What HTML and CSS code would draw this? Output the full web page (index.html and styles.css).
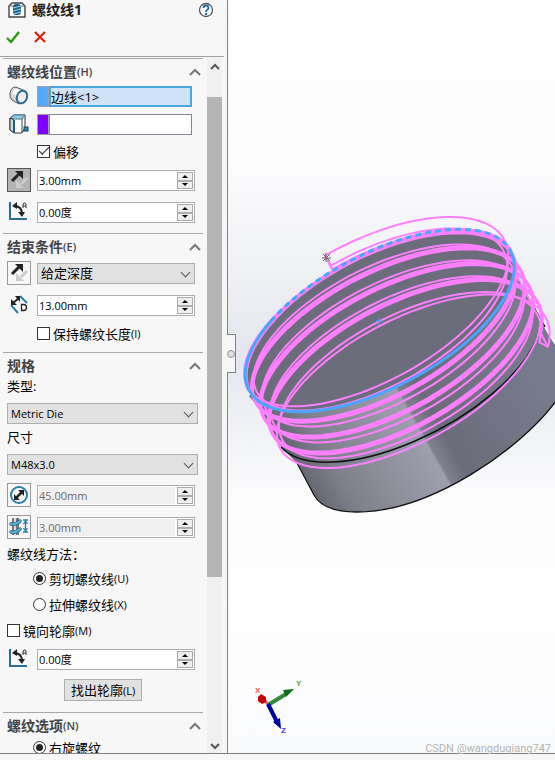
FILE: index.html
```html
<!DOCTYPE html>
<html lang="zh-CN">
<head>
  <meta charset="UTF-8">
  <meta name="viewport" content="width=device-width, initial-scale=1.0">
  <title>螺纹线1</title>
  <link rel="stylesheet" href="styles.css">
</head>
<body>
  <svg class="defs" width="0" height="0" aria-hidden="true">
    <symbol id="i-flip" viewBox="0 0 22 22">
      <path d="M4 12l7-7" stroke="#222" stroke-width="3"/>
      <path d="M7 2h8v8z" fill="#222"/>
      <path d="M19 9l-6 6" stroke="#ccc" stroke-width="3"/>
      <path d="M8 11v8h8z" fill="#ccc"/>
    </symbol>
    <symbol id="i-angle" viewBox="0 0 22 22">
      <path d="M3 2v17h17" fill="none" stroke="#2a6d8f" stroke-width="2"/>
      <path d="M7 6q8 0 8 8" fill="none" stroke="#222" stroke-width="2"/>
      <path d="M5 6l5-4v7zM11 12h7l-3 5z" fill="#222"/>
      <path d="M16 8V4l1-1h1l1 1v4M16 6h3" fill="none" stroke="#333"/>
    </symbol>
    <symbol id="i-up" viewBox="0 0 12 8">
      <path d="M1 7l5-5 5 5" fill="none" stroke="#777" stroke-width="2"/>
    </symbol>
  </svg>

  <div class="app">
    <aside class="panel">
      <header class="panel-head">
        <div class="title">
          <svg class="title-icon" viewBox="0 0 18 16">
            <path d="M1 4l3-3h10l3 3v11H1z" fill="#fff" stroke="#444" stroke-width="1.4"/>
            <path d="M1 4h4M13 4h4" stroke="#666"/>
            <rect x="5" y="2" width="8" height="11" rx="3" fill="#1f5f80"/>
            <path d="M5 6l8-2M5 9l8-2M5 12l8-2" stroke="#8fd0ee" stroke-width="1.2"/>
          </svg>
          <h1>螺纹线1</h1>
          <button class="plain" aria-label="帮助">
            <svg class="help" viewBox="0 0 16 16">
              <circle cx="8" cy="8" r="6.5" fill="#fff" stroke="#555" stroke-width="1.3"/>
              <path d="M5.500 6q0-2.500 2.500-2.500T10.500 6q0 1-1.500 2-1 .7-1 2" fill="none" stroke="#1f6fa0" stroke-width="1.800"/>
              <rect x="7" y="11" width="2" height="2" fill="#1f6fa0"/>
            </svg>
          </button>
        </div>
        <div class="actions">
          <button class="plain" aria-label="确定">
            <svg class="ok" viewBox="0 0 16 14"><path d="M2 8l4 4 8-10" fill="none" stroke="#2f9a0c" stroke-width="2.400"/></svg>
          </button>
          <button class="plain" aria-label="取消">
            <svg class="cancel" viewBox="0 0 12 12"><path d="M1 1l10 10M11 1L1 11" stroke="#e02000" stroke-width="2.200"/></svg>
          </button>
        </div>
      </header>

      <div class="panel-body">
        <div class="sections">
          <section>
            <h2>螺纹线位置<small>(H)</small><svg><use href="#i-up"/></svg></h2>
            <div class="pick">
              <svg class="icon" viewBox="0 0 24 24">
                <path d="M3 9Q4 3 9 3l9 4-6 13-7-4Q2 13 3 9z" fill="#d9dcdf" stroke="#555"/>
                <path d="M5 9l4-4 6 2-5 5z" fill="#fff"/>
                <ellipse cx="15" cy="13" rx="5" ry="6.500" transform="rotate(22 15 13)" fill="#eee" stroke="#2a6d8f" stroke-width="2"/>
              </svg>
              <span class="swatch blue"></span>
              <input class="active" type="text" value="边线&lt;1&gt;" aria-label="螺纹线边线">
            </div>
            <div class="pick">
              <svg class="icon" viewBox="0 0 24 24">
                <path d="M3 6l4-3h11v13l-3 5H7l-4-3z" fill="#fff" stroke="#333"/>
                <path d="M3 6l4-3h11l-3 4H7z" fill="#8ccfe8" stroke="#45768c"/>
                <path d="M3 6l4 2v13l-4-3z" fill="#d5dadd" stroke="#333"/>
                <path d="M7 8v13" stroke="#1f5f80" stroke-width="2"/>
                <path d="M15 7v13" stroke="#444"/>
                <rect x="17" y="15" width="4" height="4" fill="#2f88ad" stroke="#154a63"/>
              </svg>
              <span class="swatch purple"></span>
              <input type="text" aria-label="起始位置">
            </div>
            <label class="check indent"><input type="checkbox" checked>偏移</label>
            <div class="row">
              <button class="icon boxed pressed" aria-label="反向"><svg><use href="#i-flip"/></svg></button>
              <div class="spin">
                <input type="text" value="3.00mm" aria-label="偏移距离">
                <button class="inc" aria-label="增加"></button><button class="dec" aria-label="减少"></button>
              </div>
            </div>
            <div class="row">
              <span class="icon"><svg><use href="#i-angle"/></svg></span>
              <div class="spin">
                <input type="text" value="0.00度" aria-label="起始角度">
                <button class="inc" aria-label="增加"></button><button class="dec" aria-label="减少"></button>
              </div>
            </div>
          </section>

          <section>
            <h2>结束条件<small>(E)</small><svg><use href="#i-up"/></svg></h2>
            <div class="row">
              <button class="icon boxed" aria-label="反向"><svg><use href="#i-flip"/></svg></button>
              <div class="drop">
                <select class="cjk" aria-label="结束条件"><option>给定深度</option></select>
              </div>
            </div>
            <div class="row">
              <svg class="icon" viewBox="0 0 24 24">
                <path d="M13 3l7 7M4 12l7 8" stroke="#2a7fa8" stroke-width="2"/>
                <path d="M6 10l6-5" stroke="#222" stroke-width="2"/>
                <path d="M4 12V6l6 6zM13 3v6L8 3z" fill="#222"/>
                <path d="M14.500 11.500h2q3 0 3 3t-3 3h-2z" fill="#fff" stroke="#222" stroke-width="1.300"/>
              </svg>
              <div class="spin">
                <input type="text" value="13.00mm" aria-label="深度">
                <button class="inc" aria-label="增加"></button><button class="dec" aria-label="减少"></button>
              </div>
            </div>
            <label class="check indent"><input type="checkbox">保持螺纹长度<small>(I)</small></label>
          </section>

          <section>
            <h2>规格<svg><use href="#i-up"/></svg></h2>
            <label class="caption" for="type">类型:</label>
            <div class="drop"><select id="type"><option>Metric Die</option></select></div>
            <label class="caption" for="size">尺寸</label>
            <div class="drop"><select id="size"><option>M48x3.0</option></select></div>
            <div class="row">
              <button class="icon boxed" aria-label="覆盖直径">
                <svg viewBox="0 0 22 22">
                  <circle cx="11" cy="11" r="8" fill="#fff" stroke="#2a7fa8" stroke-width="2"/>
                  <path d="M8 14l6-6" stroke="#222" stroke-width="2.500"/>
                  <path d="M6 16v-6l6 6zM16 6v6l-6-6z" fill="#222"/>
                </svg>
              </button>
              <div class="spin">
                <input type="text" value="45.00mm" aria-label="直径" disabled>
                <button class="inc" aria-label="增加"></button><button class="dec" aria-label="减少"></button>
              </div>
            </div>
            <div class="row">
              <button class="icon boxed" aria-label="覆盖螺距">
                <svg viewBox="0 0 22 22">
                  <path d="M4 2h7v17H4z" fill="#777"/>
                  <path d="M6 2h2v17H6z" fill="#ddd"/>
                  <path d="M3 8q5 1 9-3M3 16q5 1 9-3" fill="none" stroke="#1f5f80" stroke-width="3.500" stroke-linecap="round"/>
                  <path d="M3 8q5 1 9-3M3 16q5 1 9-3" fill="none" stroke="#58b4dc" stroke-width="2" stroke-linecap="round"/>
                  <path d="M15 4h5M15 16h5M17.500 5v10M15.500 8l2-3 2 3M15.500 12l2 3 2-3" fill="none" stroke="#2a7fa8" stroke-width="1.300"/>
                </svg>
              </button>
              <div class="spin">
                <input type="text" value="3.00mm" aria-label="螺距" disabled>
                <button class="inc" aria-label="增加"></button><button class="dec" aria-label="减少"></button>
              </div>
            </div>
            <p class="caption">螺纹线方法：</p>
            <label class="check radio"><input type="radio" name="method" checked>剪切螺纹线<small>(U)</small></label>
            <label class="check radio"><input type="radio" name="method">拉伸螺纹线<small>(X)</small></label>
            <label class="check"><input type="checkbox">镜向轮廓<small>(M)</small></label>
            <div class="row">
              <span class="icon"><svg><use href="#i-angle"/></svg></span>
              <div class="spin">
                <input type="text" value="0.00度" aria-label="旋转角度">
                <button class="inc" aria-label="增加"></button><button class="dec" aria-label="减少"></button>
              </div>
            </div>
            <button class="locate">找出轮廓<small>(L)</small></button>
          </section>

          <section>
            <h2>螺纹选项<small>(N)</small><svg><use href="#i-up"/></svg></h2>
            <label class="check radio"><input type="radio" name="hand" checked>右旋螺纹</label>
          </section>
        </div>

        <div class="scrollbar">
          <svg viewBox="0 0 12 8"><path d="M2 6l4-4 4 4" fill="none" stroke="#555" stroke-width="2"/></svg>
          <div class="track"><div class="thumb"></div></div>
          <svg viewBox="0 0 12 8"><path d="M2 2l4 4 4-4" fill="none" stroke="#555" stroke-width="2"/></svg>
        </div>
      </div>
    </aside>

    <main class="view">
      <button class="handle" aria-label="折叠面板"></button>
      <svg class="model" viewBox="228 0 327 753" preserveAspectRatio="xMidYMid slice">
        <defs>
          <linearGradient id="side" gradientUnits="userSpaceOnUse" x1="290" y1="450" x2="507" y2="328">
            <stop offset="0" stop-color="#666873"/>
            <stop offset=".12" stop-color="#7d7f8b"/>
            <stop offset=".3" stop-color="#8e909c"/>
            <stop offset=".49" stop-color="#9d9fae"/>
            <stop offset=".5" stop-color="#7f818e"/>
            <stop offset=".57" stop-color="#6a6c79"/>
            <stop offset=".8" stop-color="#727484"/>
            <stop offset="1" stop-color="#777a8b"/>
          </linearGradient>
        </defs>
        <path d="M249 396L262 412L281 447L298 464L314 495Q323 512 357 512C430 512 520 450 556 401V346L514 272L380 300z" fill="url(#side)"/>
        <path d="M297 463L314 495Q323 512 357 512C430 512 520 450 556 401M514 272L556 346" fill="none" stroke="#111" stroke-width="1.300"/>
        <path d="M545 327L556 345" stroke="#fff" stroke-width="2"/>
        <ellipse cx="380" cy="321" rx="148" ry="66" transform="rotate(-28 380 321)" fill="#6b6d7a"/>
        <path d="M281 447A148 66 -28 0 0 538 336" fill="none" stroke="#111" stroke-width="1.500"/>
        <g id="thread" class="thread"></g>
        <path class="rim" d="M249 390A148 66 -28 0 1 511 252"/>
        <path class="edge dashed" d="M271 321A148 66 -28 0 1 511 252"/>
        <path class="edge" d="M511 252A148 66 -28 0 1 249 390A148 66 -28 0 1 271 321"/>
        <path d="M323 254l7 7M330 254l-7 7M326 253v9M322 258h9" stroke="#666"/>
        <path d="M379 317v8M376 321h7" stroke="#4aa5ff"/>

        <g class="triad">
          <path d="M269 705l-7-7" stroke="#f06060" stroke-width="3"/>
          <path d="M258 697l3-3 5 3v5l-4 2-4-3z" fill="#c80000"/>
          <path d="M268 705l18-11" stroke="#2f8a3a" stroke-width="4"/>
          <path d="M283 690l11-1-8 8z" fill="#0e6a18"/>
          <path d="M268 704l9 18" stroke="#0000a0" stroke-width="4"/>
          <path d="M273 722l7-4 1 11z" fill="#0000a0"/>
          <text x="255" y="693" fill="#f55">X</text>
          <text x="296" y="686" fill="#5a5">Y</text>
          <text x="281" y="733" fill="#44f">Z</text>
        </g>
      </svg>
      <span class="credit">CSDN @wangduqiang747</span>
    </main>
  </div>
  <script src="thread.js"></script>
</body>
</html>
```
FILE: styles.css
```css
* {
  box-sizing: border-box;
}

body {
  margin: 0;
  font-family: "Open Sans", "Noto Sans CJK SC", sans-serif;
  font-size: 13px;
  color: #000;
  background-color: #f7f7f7;
}

h1, h2, p {
  margin: 0;
}

small {
  font-size: 11px;
}

button, input, select {
  margin: 0;
  padding: 0;
  font-family: inherit;
  font-size: 11px;
  color: #000;
}

.defs {
  position: absolute;
}

.app {
  display: flex;
  height: calc(100vh - 6px);
  border-bottom: 1px solid #808080;
}

/* property panel */
.panel {
  display: flex;
  flex-direction: column;
  flex: 0 0 228px;
  min-width: 0;
  min-height: 0;
  border-right: 1px solid #808080;
  background-color: #f7f7f7;
}

.panel-head {
  height: 57px;
  margin-right: 3px;
  border-bottom: 1px solid #a0a0a0;
}

.title {
  display: flex;
  align-items: center;
  height: 20px;
  padding: 0 10px 0 8px;
}

.title h1 {
  flex: 1;
  margin-left: 6px;
  font-size: 14px;
  line-height: 20px;
  color: #222;
}

.title-icon {
  width: 18px;
  height: 16px;
}

.plain {
  display: flex;
  border: none;
  background: none;
}

.help {
  width: 16px;
  height: 16px;
}

.actions {
  display: flex;
  align-items: center;
  gap: 13px;
  height: 34px;
  padding-left: 5px;
}

.ok {
  width: 16px;
  height: 14px;
}

.cancel {
  width: 12px;
  height: 12px;
}

.panel-body {
  display: flex;
  flex: 1;
  min-height: 0;
  padding: 1px 5px 0 3px;
}

.sections {
  flex: 1;
  min-width: 0;
  overflow: hidden;
  margin-right: 4px;
}

section {
  padding: 0 5px 9px 4px;
  border-top: 1px solid #a8a8a8;
}

h2 {
  display: flex;
  align-items: center;
  height: 26px;
  font-size: 14px;
  line-height: 26px;
  color: #444;
}

h2 small {
  font-weight: 600;
}

h2 svg {
  width: 12px;
  height: 8px;
  margin-left: auto;
  margin-right: -3px;
}

.row, .pick {
  display: flex;
  align-items: center;
  height: 24px;
  margin-top: 8px;
  padding-right: 3px;
}

h2 + .row {
  margin-top: 1px;
}

.check + .row {
  margin-top: 7px;
}

.pick {
  height: 22px;
  margin: 0 0 6px;
  padding-right: 6px;
}

.icon {
  flex: 0 0 24px;
  height: 24px;
  margin-right: 6px;
}

.icon svg {
  display: block;
  width: 22px;
  height: 22px;
}

.boxed {
  border: 1px solid #999;
  background-color: #f7f7f7;
}

.pressed {
  border-color: #555;
  background-color: #b4b4b4;
}

.swatch {
  flex: none;
  width: 12px;
  height: 21px;
  border: 1px solid #a0a0a0;
}

.blue {
  background-color: #55aaff;
}

.purple {
  background-color: #8000ff;
}

.pick input {
  flex: 1;
  min-width: 0;
  height: 21px;
  padding-left: 2px;
  font-size: 13px;
  border: 1px solid #7f87a0;
  background-color: #fff;
}

.pick .active {
  padding-left: 0;
  border: 2px solid #4ba6e0;
  background-color: #cfe3f8;
}

.spin {
  display: grid;
  grid-template-columns: 1fr 16px;
  grid-template-rows: 9px 8px;
  column-gap: 2px;
  flex: 1;
  min-width: 0;
  height: 21px;
  padding: 1px;
  border: 1px solid #abadb3;
  background-color: #fff;
}

.spin input {
  grid-row: 1 / 3;
  min-width: 0;
  height: 17px;
  border: none;
  background: none;
}

.spin input:disabled {
  color: #6d6d6d;
  background-color: #f0f0f0;
}

.spin button {
  display: flex;
  align-items: center;
  justify-content: center;
  border: 1px solid #acacac;
  background-color: #eee;
}

.spin button::before {
  content: "";
  border: 3px solid transparent;
}

.inc::before {
  margin-top: -3px;
  border-bottom-color: #000 !important;
}

.dec::before {
  margin-bottom: -3px;
  border-top-color: #000 !important;
}

.drop {
  position: relative;
  flex: 1;
}

.drop::after {
  content: "";
  position: absolute;
  top: 6px;
  right: 6px;
  width: 6px;
  height: 6px;
  border: solid #555;
  border-width: 0 1px 1px 0;
  transform: rotate(45deg);
}

.drop select {
  display: block;
  width: 100%;
  height: 21px;
  padding-left: 3px;
  appearance: none;
  border: 1px solid #adadad;
  border-radius: 0;
  background-color: #e1e1e1;
}

.drop .cjk {
  font-size: 13px;
}

.caption {
  display: block;
  margin-top: 5px;
  font-size: 13px;
  line-height: 16px;
}

h2 + .caption {
  margin-top: -1px;
}

.row + .caption {
  margin-top: 7px;
}

.caption + .drop {
  margin-top: 9px;
}

.check {
  display: flex;
  align-items: center;
  height: 20px;
  margin-top: 6px;
  white-space: nowrap;
}

h2 + .check {
  margin-top: -2px;
}

.check input {
  display: grid;
  place-content: center;
  flex: none;
  width: 13px;
  height: 13px;
  margin-right: 3px;
  appearance: none;
  border: 1px solid #333;
  background-color: #fff;
}

.check input[type="checkbox"]:checked::before {
  content: "";
  width: 9px;
  height: 4px;
  margin-top: -3px;
  border: solid #222;
  border-width: 0 0 1px 1px;
  transform: rotate(-45deg);
}

.check input[type="radio"] {
  border-radius: 50%;
}

.check input[type="radio"]:checked::before {
  content: "";
  width: 7px;
  height: 7px;
  border-radius: 50%;
  background-color: #222;
}

.indent {
  margin-left: 30px;
}

.radio {
  margin-left: 26px;
}

.locate {
  display: block;
  height: 22px;
  margin: 8px auto 11px 57px;
  padding: 0 6px;
  font-size: 13px;
  line-height: 18px;
  border: 1px solid #adadad;
  background-color: #e1e1e1;
}

section:has(.locate) {
  padding-bottom: 0;
}

.scrollbar {
  display: flex;
  flex: none;
  flex-direction: column;
  align-items: center;
  width: 15px;
  background-color: #f0f0f0;
}

.scrollbar svg {
  flex: none;
  width: 12px;
  height: 8px;
  margin: 5px 0 3px;
}

.track {
  flex: 1;
  width: 100%;
  padding-top: 23px;
}

.thumb {
  height: 75%;
  background-color: #b4b4b4;
}

/* graphics area */
.view {
  position: relative;
  flex: 1;
  min-width: 0;
  background: linear-gradient(#fff 0, #fdfdfe 20%, #f2f3f6 34%, #e3e6ee 47%, #f0f2f6 57%, #fcfcfd 66%, #fff 80%, #f9fafc 100%);
}

.model {
  display: block;
  width: 100%;
  height: 100%;
}

.handle {
  position: absolute;
  top: 334px;
  left: -1px;
  width: 9px;
  height: 39px;
  border: 1px solid #808080;
  border-left: none;
  background-color: #f7f7f7;
}

.handle::before {
  content: "";
  display: block;
  width: 6px;
  height: 6px;
  border: 1px solid #999;
  border-radius: 50%;
  background-color: #ddd;
}

.thread, .rim {
  fill: none;
  stroke: #ff80ff;
  stroke-width: 2;
  stroke-linejoin: round;
}

.thread .crest {
  stroke-width: 3;
}

.rim {
  stroke-width: 4;
}

.edge {
  fill: none;
  stroke: #4aa5ff;
  stroke-width: 3;
}

.dashed {
  stroke-dasharray: 6 4;
}

.triad text {
  font: bold 8px "Liberation Sans", sans-serif;
}

.credit {
  position: absolute;
  right: 4px;
  bottom: -4px;
  font-family: Roboto, sans-serif;
  font-size: 11px;
  line-height: 16px;
  color: #b4b4b4;
}
```
FILE: thread.js
```js
const NS = 'http://www.w3.org/2000/svg';
const thread = document.getElementById('thread');

// rim of the cylinder on screen, and its axis
const cx = 380, cy = 321, rx = 148, ry = 66;
const tilt = 28 * Math.PI / 180;
const pitch = 18;
const turns = 13 / 3;
const start = -97;

// level is counted in pitches below the rim, size is the radius factor
function point(deg, level, size) {
  const a = deg * Math.PI / 180;
  const u = rx * size * Math.cos(a);
  const v = ry * size * Math.sin(a) + level * pitch;
  const x = cx + u * Math.cos(tilt) + v * Math.sin(tilt);
  const y = cy - u * Math.sin(tilt) + v * Math.cos(tilt);
  return x.toFixed(1) + ' ' + y.toFixed(1);
}

function addPath(points, name) {
  const path = document.createElementNS(NS, 'path');
  path.setAttribute('d', 'M' + points.join('L'));
  if (name) path.setAttribute('class', name);
  thread.appendChild(path);
}

function helix(offset, size, from, to) {
  const points = [];
  for (let d = from; d <= to; d += 4) {
    points.push(point(start + d, offset + d / 360, size));
  }
  return points;
}

// corners of the thread profile: upper, root, lower
const corners = [[-1, 1], [-0.5, 0.96], [-0.12, 1]];
const total = turns * 360;

// the crests of neighbouring turns touch, so they are drawn heavier there
addPath(helix(-1, 1, 0, 360));
addPath(helix(-1, 1, 360, total), 'crest');
addPath(helix(-0.5, 0.96, 0, total));
addPath(helix(-0.12, 1, 0, total - 360), 'crest');
addPath(helix(-0.12, 1, total - 360, total));

// profile at both ends
[0, turns].forEach((n) => {
  const ends = corners.map(([offset, size]) => point(start + n * 360, offset + n, size));
  addPath([...ends, ends[0]]);
});
```
